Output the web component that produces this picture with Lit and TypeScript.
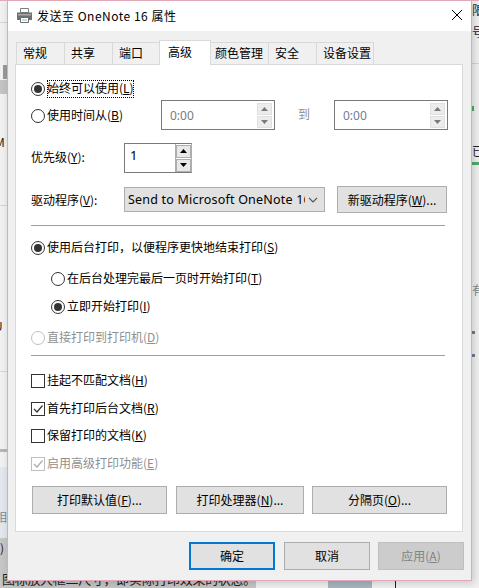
import { LitElement, html, css, svg } from "lit";
import { customElement } from "lit/decorators.js";

const up = svg`<svg class="arrow" viewBox="0 0 7 4"><path d="M3.5 0 7 4H0z"/></svg>`;
const down = svg`<svg class="arrow" viewBox="0 0 7 4"><path d="M0 0h7L3.5 4z"/></svg>`;

@customElement("app-root")
export class AppRoot extends LitElement {
  static styles = css`
    :host { display: block; width: 479px; height: 588px; position: relative; overflow: hidden; background: #f1f1f1;
      font: 12px "Noto Sans CJK SC", "Noto Sans", sans-serif; color: #000; }
    * { box-sizing: border-box; }
    .window { position: absolute; left: 7px; top: 0; width: 465px; height: 581px; background: #f0f0f0;
      border: 1px solid #dfa9b8; display: flex; flex-direction: column; box-shadow: 2px 2px 8px rgba(0,0,0,.18); }
    .title { height: 30px; background: #fff; display: flex; align-items: center; padding: 0 0 2px 8px; flex: none; font-size: 12px; letter-spacing: .5px; }
    .title svg.printer { width: 17px; height: 17px; margin-right: 4px; }
    .title .close { margin-left: auto; width: 14px; height: 14px; margin-right: 7px; }
    .tabs { display: flex; height: 24px; margin: 9px 0 0 8px; align-items: flex-end; flex: none; }
    .tab { height: 22px; border: 1px solid #d9d9d9; border-bottom: 0; border-right: 0; display: flex; align-items: center; padding-left: 6px; padding-bottom: 2px; }
    .tab.last { border-right: 1px solid #d9d9d9; }
    .tab.sel { height: 25px; background: #fff; border-right: 1px solid #d9d9d9; margin-bottom: -1px; position: relative; z-index: 1; padding-left: 8px; padding-bottom: 3px; }
    .tab.after { border-left: 0; padding-left: 4px; }
    .panel { margin: 0 0 0 7px; width: 448px; height: 468px; background: #fff; border: 1px solid #d9d9d9; padding: 0 15px; flex: none; display: flex; flex-direction: column; }
    .row { display: flex; align-items: center; flex: none; height: 18px; }
    .opt { display: inline-flex; align-items: center; gap: 2px; height: 18px; padding-right: 2px; white-space: nowrap; }
    .opt .txt { display: block; height: 18px; line-height: 16px; }
    .focus { outline: 1px dotted #000; outline-offset: -1px; }
    .radio { width: 14px; height: 14px; border: 1px solid #333; border-radius: 50%; display: flex; align-items: center; justify-content: center; flex: none; background: #fff; }
    .radio.on::after { content: ""; width: 8px; height: 8px; background: #333; border-radius: 50%; }
    .check { width: 14px; height: 14px; border: 1px solid #333; flex: none; display: flex; }
    .check svg { width: 12px; height: 12px; }
    .dis { color: #8f8f8f; }
    .dis .radio { border-color: #bfbfbf; }
    .dis .check { border-color: #bfbfbf; }
    u { text-underline-offset: 1px; }
    .timerow { height: 30px; margin-top: 2px; position: relative; }
    .timeopt { margin-top: 2px; }
    .timebox { position: absolute; top: 0; width: 114px; height: 30px; border: 1px solid #7a7a7a; display: flex; align-items: center; justify-content: space-between; padding: 0 2px 0 8px; color: #7a7a7a; font-family: "Noto Sans", sans-serif; }
    .tb1 { left: 130px; }
    .tb2 { left: 303px; }
    .to { position: absolute; left: 267px; top: 5px; color: #8f8f8f; }
    .timebox.t2 { color: #6f7f90; }
    .spin { display: flex; flex-direction: column; gap: 1px; width: 15px; flex: none; }
    .spin span { height: 12px; background: #ececec; border: 1px solid #e0e0e0; display: flex; align-items: center; justify-content: center; }
    .arrow { width: 7px; height: 4px; fill: #7a7a7a; }
    .prio { height: 30px; margin-top: 13px; }
    .lab { width: 93px; }
    .prio .lab { padding-bottom: 3px; }
    .num { width: 68px; height: 30px; border: 1px solid #7a7a7a; border-right-color: #adadad; border-top-color: #7a7a7a; display: flex; justify-content: space-between; align-items: center; padding: 0 0 0 5px; font-family: "Noto Sans", sans-serif; }
    .num .val { margin-top: -6px; font-size: 13px; }
    .num .spin { width: 16px; border-left: 1px solid #adadad; height: 28px; justify-content: center; }
    .num .spin span { height: 13px; background: #e8e8e8; border-color: #adadad; }
    .num .arrow { fill: #000; }
    .drv { height: 27px; margin-top: 13px; gap: 12px; }
    .drv .lab { margin-right: -12px; }
    .select { width: 201px; height: 25px; background: #e1e1e1; border: 1px solid #adadad; display: flex; align-items: center; padding: 0 6px 0 3px; overflow: hidden; font-family: "Noto Sans", sans-serif; font-size: 12.5px; letter-spacing: .2px; white-space: nowrap; }
    .select .txt { width: 177px; overflow: hidden; }
    .select svg { margin-left: auto; width: 10px; height: 6px; flex: none; }
    .btn { background: #e1e1e1; border: 1px solid #adadad; display: flex; align-items: center; justify-content: center; white-space: nowrap; flex: none; height: 28px; padding-bottom: 1px; }
    .hr { height: 1px; background: #a0a0a0; flex: none; width: 414px; }
    .w110 { width: 110px; height: 27px; }
    .mt16 { margin-top: 16px; }
    .mt13 { margin-top: 13px; }
    .mt12 { margin-top: 12px; }
    .mt10 { margin-top: 10px; }
    .mt9 { margin-top: 9px; }
    .mt8 { margin-top: 8px; }
    .mt15 { margin-top: 15px; }
    .sub { padding-left: 20px; }
    .btns { height: 28px; margin-top: 13px; padding-left: 1px; gap: 9px; }
    .b1 { width: 135px; }
    .b2 { width: 128px; }
    .b3 { width: 135px; margin-left: -1px; }
    .foot { display: flex; height: 28px; gap: 9px; margin: 10px 0 0 181px; flex: none; }
    .foot .btn { width: 86px; }
    .foot .btn.def { border: 2px solid #0078d7; }
    .foot .btn.off { background: #ccc; border-color: #bfbfbf; color: #838383; margin-left: -1px; }
    .scrap { position: absolute; font-size: 12px; color: #222; white-space: nowrap; line-height: 16px; }
    .scrap.gray { color: #7f8a96; }
    .bar { position: absolute; }
    .b-top { left: 0; top: 0; width: 479px; height: 1px; background: #dfa9b8; }
    .b-l1 { left: 0; top: 22px; width: 7px; height: 1px; background: #d5d5d5; }
    .b-l2 { left: 3px; top: 65px; width: 4px; height: 14px; background: #9a9a9a; }
    .b-l2b { left: 0; top: 80px; width: 7px; height: 14px; background: #c4c4c4; }
    .b-l3 { left: 0; top: 205px; width: 7px; height: 1px; background: #d5d5d5; }
    .b-l4 { left: 0; top: 371px; width: 7px; height: 1px; background: #d5d5d5; }
    .b-l5 { left: 0; top: 449px; width: 7px; height: 3px; background: #b5b5b5; }
    .b-l6 { left: 0; top: 467px; width: 7px; height: 71px; background: #e4e7ee; }
    .b-l7 { left: 0; top: 538px; width: 7px; height: 50px; background: #c6c6c6; }
    .b-b1 { left: 0; top: 581px; width: 256px; height: 7px; background: #c6c6c6; }
    .b-b2 { left: 328px; top: 581px; width: 44px; height: 7px; background: #a8b6be; }
    .b-b3 { left: 395px; top: 581px; width: 1px; height: 7px; background: #222; }
    .b-r1 { left: 472px; top: 63px; width: 7px; height: 1px; background: #d5d5d5; }
    .b-r2 { left: 472px; top: 106px; width: 2px; height: 5px; background: #4caf6a; }
    .b-r3 { left: 472px; top: 162px; width: 7px; height: 3px; background: #4caf6a; }
    .b-r4 { left: 472px; top: 331px; width: 3px; height: 3px; background: #6b7a96; }
    .b-r5 { left: 472px; top: 354px; width: 3px; height: 3px; background: #6b7a96; }
    .s-r1 { left: 472px; top: 2px; }
    .s-r2 { left: 472px; top: 24px; }
    .s-r3 { left: 472px; top: 143px; }
    .s-r4 { left: 472px; top: 282px; }
    .s-l1 { left: -5px; top: 134px; }
    .s-l2 { left: -6px; top: 318px; }
    .s-l3 { left: -5px; top: 509px; }
    .s-l4 { left: 0; top: 540px; }
    .s-bottom { left: 2px; top: 571px; font-size: 13px; letter-spacing: -.3px; }
  `;

  private radio(on: boolean) { return html`<span class="radio ${on ? "on" : ""}"></span>`; }
  private check(on: boolean, color = "#333") {
    return html`<span class="check">${on ? svg`<svg viewBox="0 0 12 12"><path d="M2 6l3 3 5.500-6.500" fill="none" stroke=${color} stroke-width="1.200"/></svg>` : ""}</span>`;
  }
  private spin() { return html`<div class="spin"><span>${up}</span><span>${down}</span></div>`; }

  render() {
    return html`
      <div class="bar b-l1"></div><div class="bar b-l2"></div><div class="bar b-l2b"></div>
      <div class="bar b-l3"></div><div class="bar b-l4"></div><div class="bar b-l5"></div>
      <div class="bar b-l6"></div><div class="bar b-l7"></div><div class="bar b-b1"></div>
      <div class="bar b-b2"></div><div class="bar b-b3"></div>
      <div class="bar b-r1"></div><div class="bar b-r2"></div><div class="bar b-r3"></div>
      <div class="bar b-r4"></div><div class="bar b-r5"></div>
      <div class="scrap s-r1">限</div><div class="scrap s-r2">号</div>
      <div class="scrap s-r3">已</div><div class="scrap gray s-r4">有</div>
      <div class="scrap s-l1">M</div><div class="scrap s-l2">U</div>
      <div class="scrap gray s-l3">相</div><div class="scrap s-l4">)</div>
      <div class="scrap s-bottom">图标放大框二尺寸，即实际打印效果的状态。</div>
      <div class="window">
        <div class="title">
          <svg class="printer" viewBox="0 0 17 17">
            <path d="M4.500 1.500h8v4h-8z" fill="#fff" stroke="#7d7d7d"/>
            <path d="M1 5.500h15V13H1z" fill="#6f6f6f"/>
            <path d="M2 7h13v1.500H2z" fill="#a8a8a8"/>
            <path d="M4.500 10.500h8v5h-8z" fill="#fff" stroke="#6d6d6d"/>
            <path d="M6 12h5v2H6z" fill="#bfe0f2"/>
          </svg>
          <span>发送至 OneNote 16 属性</span>
          <svg class="close" viewBox="0 0 14 14"><path d="M2 2l10 10M12 2 2 12" stroke="#000" stroke-width="1" fill="none"/></svg>
        </div>
        <div class="tabs">
          <div class="tab" style="width:48px">常规</div>
          <div class="tab" style="width:48px">共享</div>
          <div class="tab" style="width:47px">端口</div>
          <div class="tab sel" style="width:52px">高级</div>
          <div class="tab after" style="width:57px">颜色管理</div>
          <div class="tab" style="width:48px">安全</div>
          <div class="tab last" style="width:58px">设备设置</div>
        </div>
        <div class="panel">
          <div class="row mt15"><span class="opt">${this.radio(true)}<span class="txt focus">始终可以使用(<u>L</u>)</span></span></div>
          <div class="row timerow">
            <span class="opt timeopt">${this.radio(false)}<span class="txt">使用时间从(<u>B</u>)</span></span>
            <div class="timebox tb1"><span>0:00</span>${this.spin()}</div>
            <span class="to">到</span>
            <div class="timebox tb2 t2"><span>0:00</span>${this.spin()}</div>
          </div>
          <div class="row prio"><span class="lab">优先级(<u>Y</u>):</span>
            <div class="num"><span class="val">1</span>${this.spin()}</div></div>
          <div class="row drv"><span class="lab">驱动程序(<u>V</u>):</span>
            <div class="select"><span class="txt">Send to Microsoft OneNote 16</span><svg viewBox="0 0 10 6"><path d="M1 1l4 4 4-4" fill="none" stroke="#555" stroke-width="1.100"/></svg></div>
            <div class="btn w110">新驱动程序(<u>W</u>)...</div></div>
          <div class="hr mt12"></div>
          <div class="row mt13"><span class="opt">${this.radio(true)}<span class="txt">使用后台打印，以便程序更快地结束打印(<u>S</u>)</span></span></div>
          <div class="row mt13 sub"><span class="opt">${this.radio(false)}<span class="txt">在后台处理完最后一页时开始打印(<u>T</u>)</span></span></div>
          <div class="row mt10 sub"><span class="opt">${this.radio(true)}<span class="txt">立即开始打印(<u>I</u>)</span></span></div>
          <div class="row mt13 dis"><span class="opt">${this.radio(false)}<span class="txt">直接打印到打印机(<u>D</u>)</span></span></div>
          <div class="hr mt8"></div>
          <div class="row mt16"><span class="opt">${this.check(false)}<span class="txt">挂起不匹配文档(<u>H</u>)</span></span></div>
          <div class="row mt10"><span class="opt">${this.check(true)}<span class="txt">首先打印后台文档(<u>R</u>)</span></span></div>
          <div class="row mt9"><span class="opt">${this.check(false)}<span class="txt">保留打印的文档(<u>K</u>)</span></span></div>
          <div class="row mt10 dis"><span class="opt">${this.check(true, "#aaa")}<span class="txt">启用高级打印功能(<u>E</u>)</span></span></div>
          <div class="row btns">
            <div class="btn b1">打印默认值(<u>F</u>)...</div>
            <div class="btn b2">打印处理器(<u>N</u>)...</div>
            <div class="btn b3">分隔页(<u>O</u>)...</div>
          </div>
        </div>
        <div class="foot">
          <div class="btn def">确定</div>
          <div class="btn">取消</div>
          <div class="btn off">应用(<u>A</u>)</div>
        </div>
      </div>
      <div class="bar b-top"></div>
    `;
  }
}
